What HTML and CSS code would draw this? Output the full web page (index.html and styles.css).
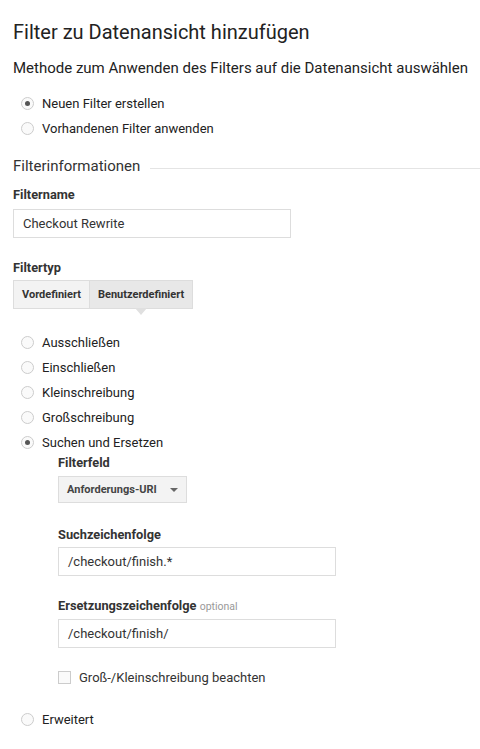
FILE: index.html
```html
<!DOCTYPE html>
<html lang="de">

<head>
    <meta charset="UTF-8">
    <meta name="viewport" content="width=device-width, initial-scale=1.0">
    <title>Filter zu Datenansicht hinzufügen</title>
    <link rel="stylesheet" href="styles.css">
</head>

<body>
    <h1 class="title">Filter zu Datenansicht hinzufügen</h1>
    <p class="subtitle">Methode zum Anwenden des Filters auf die Datenansicht auswählen</p>

    <div class="radios top">
        <label class="radio"><span class="dot on"></span>Neuen Filter erstellen</label>
        <label class="radio"><span class="dot"></span>Vorhandenen Filter anwenden</label>
    </div>

    <div class="section">
        <span>Filterinformationen</span>
        <div class="rule"></div>
    </div>

    <div class="label">Filtername</div>
    <div class="field wide">Checkout Rewrite</div>

    <div class="label typ">Filtertyp</div>
    <div class="tabs">
        <div class="tab">Vordefiniert</div>
        <div class="tab sel">Benutzerdefiniert</div>
    </div>

    <div class="radios list">
        <label class="radio"><span class="dot"></span>Ausschließen</label>
        <label class="radio"><span class="dot"></span>Einschließen</label>
        <label class="radio"><span class="dot"></span>Kleinschreibung</label>
        <label class="radio"><span class="dot"></span>Großschreibung</label>
        <label class="radio"><span class="dot on"></span>Suchen und Ersetzen</label>
    </div>

    <div class="sub">
        <div class="label">Filterfeld</div>
        <div class="select">Anforderungs-URI <span class="caret"></span></div>

        <div class="label gap first">Suchzeichenfolge</div>
        <div class="field">/checkout/finish.*</div>

        <div class="label gap">Ersetzungszeichenfolge <span class="opt">optional</span></div>
        <div class="field">/checkout/finish/</div>

        <label class="check"><span class="box"></span>Groß-/Kleinschreibung beachten</label>
    </div>

    <div class="radios last">
        <label class="radio"><span class="dot"></span>Erweitert</label>
    </div>
</body>

</html>
```

FILE: styles.css
```css
body {
    margin: 0;
    padding: 0 0 0 13px;
    font-family: Roboto, "Liberation Sans", sans-serif;
    color: #222;
    background: white;
    overflow: hidden;
}

.title {
    margin: 0;
    padding-top: 20px;
    font-size: 20px;
    font-weight: normal;
    line-height: 24px;
}

.subtitle {
    margin: 14px 0 0;
    font-size: 15px;
    line-height: 20px;
    white-space: nowrap;
}

.radios {
    display: flex;
    flex-direction: column;
    padding-left: 8px;
}

.radios.top {
    margin-top: 13px;
}

.radio {
    display: flex;
    align-items: center;
    height: 25px;
    font-size: 13px;
    gap: 8px;
}

.dot {
    width: 13px;
    height: 13px;
    border: 1px solid #ccc;
    border-radius: 50%;
    background: #fafafa;
    box-sizing: border-box;
    position: relative;
}

.dot.on::after {
    content: "";
    position: absolute;
    left: 3px;
    top: 3px;
    width: 5px;
    height: 5px;
    border-radius: 50%;
    background: #555;
}

.section {
    display: flex;
    align-items: center;
    margin-top: 15px;
    font-size: 15px;
    color: #333;
    line-height: 20px;
}

.rule {
    flex: 1;
    height: 1px;
    background: #e4e4e4;
    margin: 4px 0 0 10px;
}

.label {
    margin-top: 11px;
    font-size: 12.8px;
    font-weight: bold;
    line-height: 16px;
    color: #333;
}

.label.typ {
    margin-top: 22px;
}

.label.gap {
    margin-top: 22px;
}

.label.first {
    margin-top: 24px;
}

.opt {
    font-weight: normal;
    font-size: 10.5px;
    color: #999;
}

.field {
    margin-top: 6px;
    width: 278px;
    height: 29px;
    box-sizing: border-box;
    border: 1px solid #ddd;
    padding: 0 9px;
    font-size: 13px;
    line-height: 27px;
    color: #333;
}

.sub .field {
    margin-top: 4px;
}

.tabs {
    display: flex;
    margin-top: 4px;
    position: relative;
}

.tab {
    height: 27px;
    line-height: 27px;
    padding: 0 8px;
    font-size: 11px;
    font-weight: bold;
    color: #333;
    background: #f3f3f3;
    border: 1px solid #ddd;
}

.tab.sel {
    background: #e8e8e8;
    border-left: none;
    position: relative;
}

.tab.sel::after {
    content: "";
    position: absolute;
    left: 50%;
    bottom: -7px;
    margin-left: -6px;
    border-left: 6px solid transparent;
    border-right: 6px solid transparent;
    border-top: 7px solid #e0e0e0;
}

.radios.list {
    margin-top: 21px;
}

.sub {
    padding-left: 45px;
}

.sub .label:first-child {
    margin-top: 0;
}

.select {
    display: inline-flex;
    align-items: center;
    margin-top: 5px;
    height: 27px;
    box-sizing: border-box;
    padding: 0 8px;
    width: 129px;
    font-size: 11px;
    font-weight: bold;
    color: #444;
    background: #f3f3f3;
    border: 1px solid #ddd;
    gap: 10px;
}

.caret {
    border-left: 4px solid transparent;
    border-right: 4px solid transparent;
    border-top: 4px solid #666;
    margin-left: auto;
}

.check {
    display: flex;
    align-items: center;
    gap: 8px;
    margin-top: 22px;
    font-size: 13px;
    color: #333;
}

.box {
    width: 13px;
    height: 13px;
    box-sizing: border-box;
    border: 1px solid #ccc;
    background: #fafafa;
}

.radios.last {
    margin-top: 22px;
}
```
